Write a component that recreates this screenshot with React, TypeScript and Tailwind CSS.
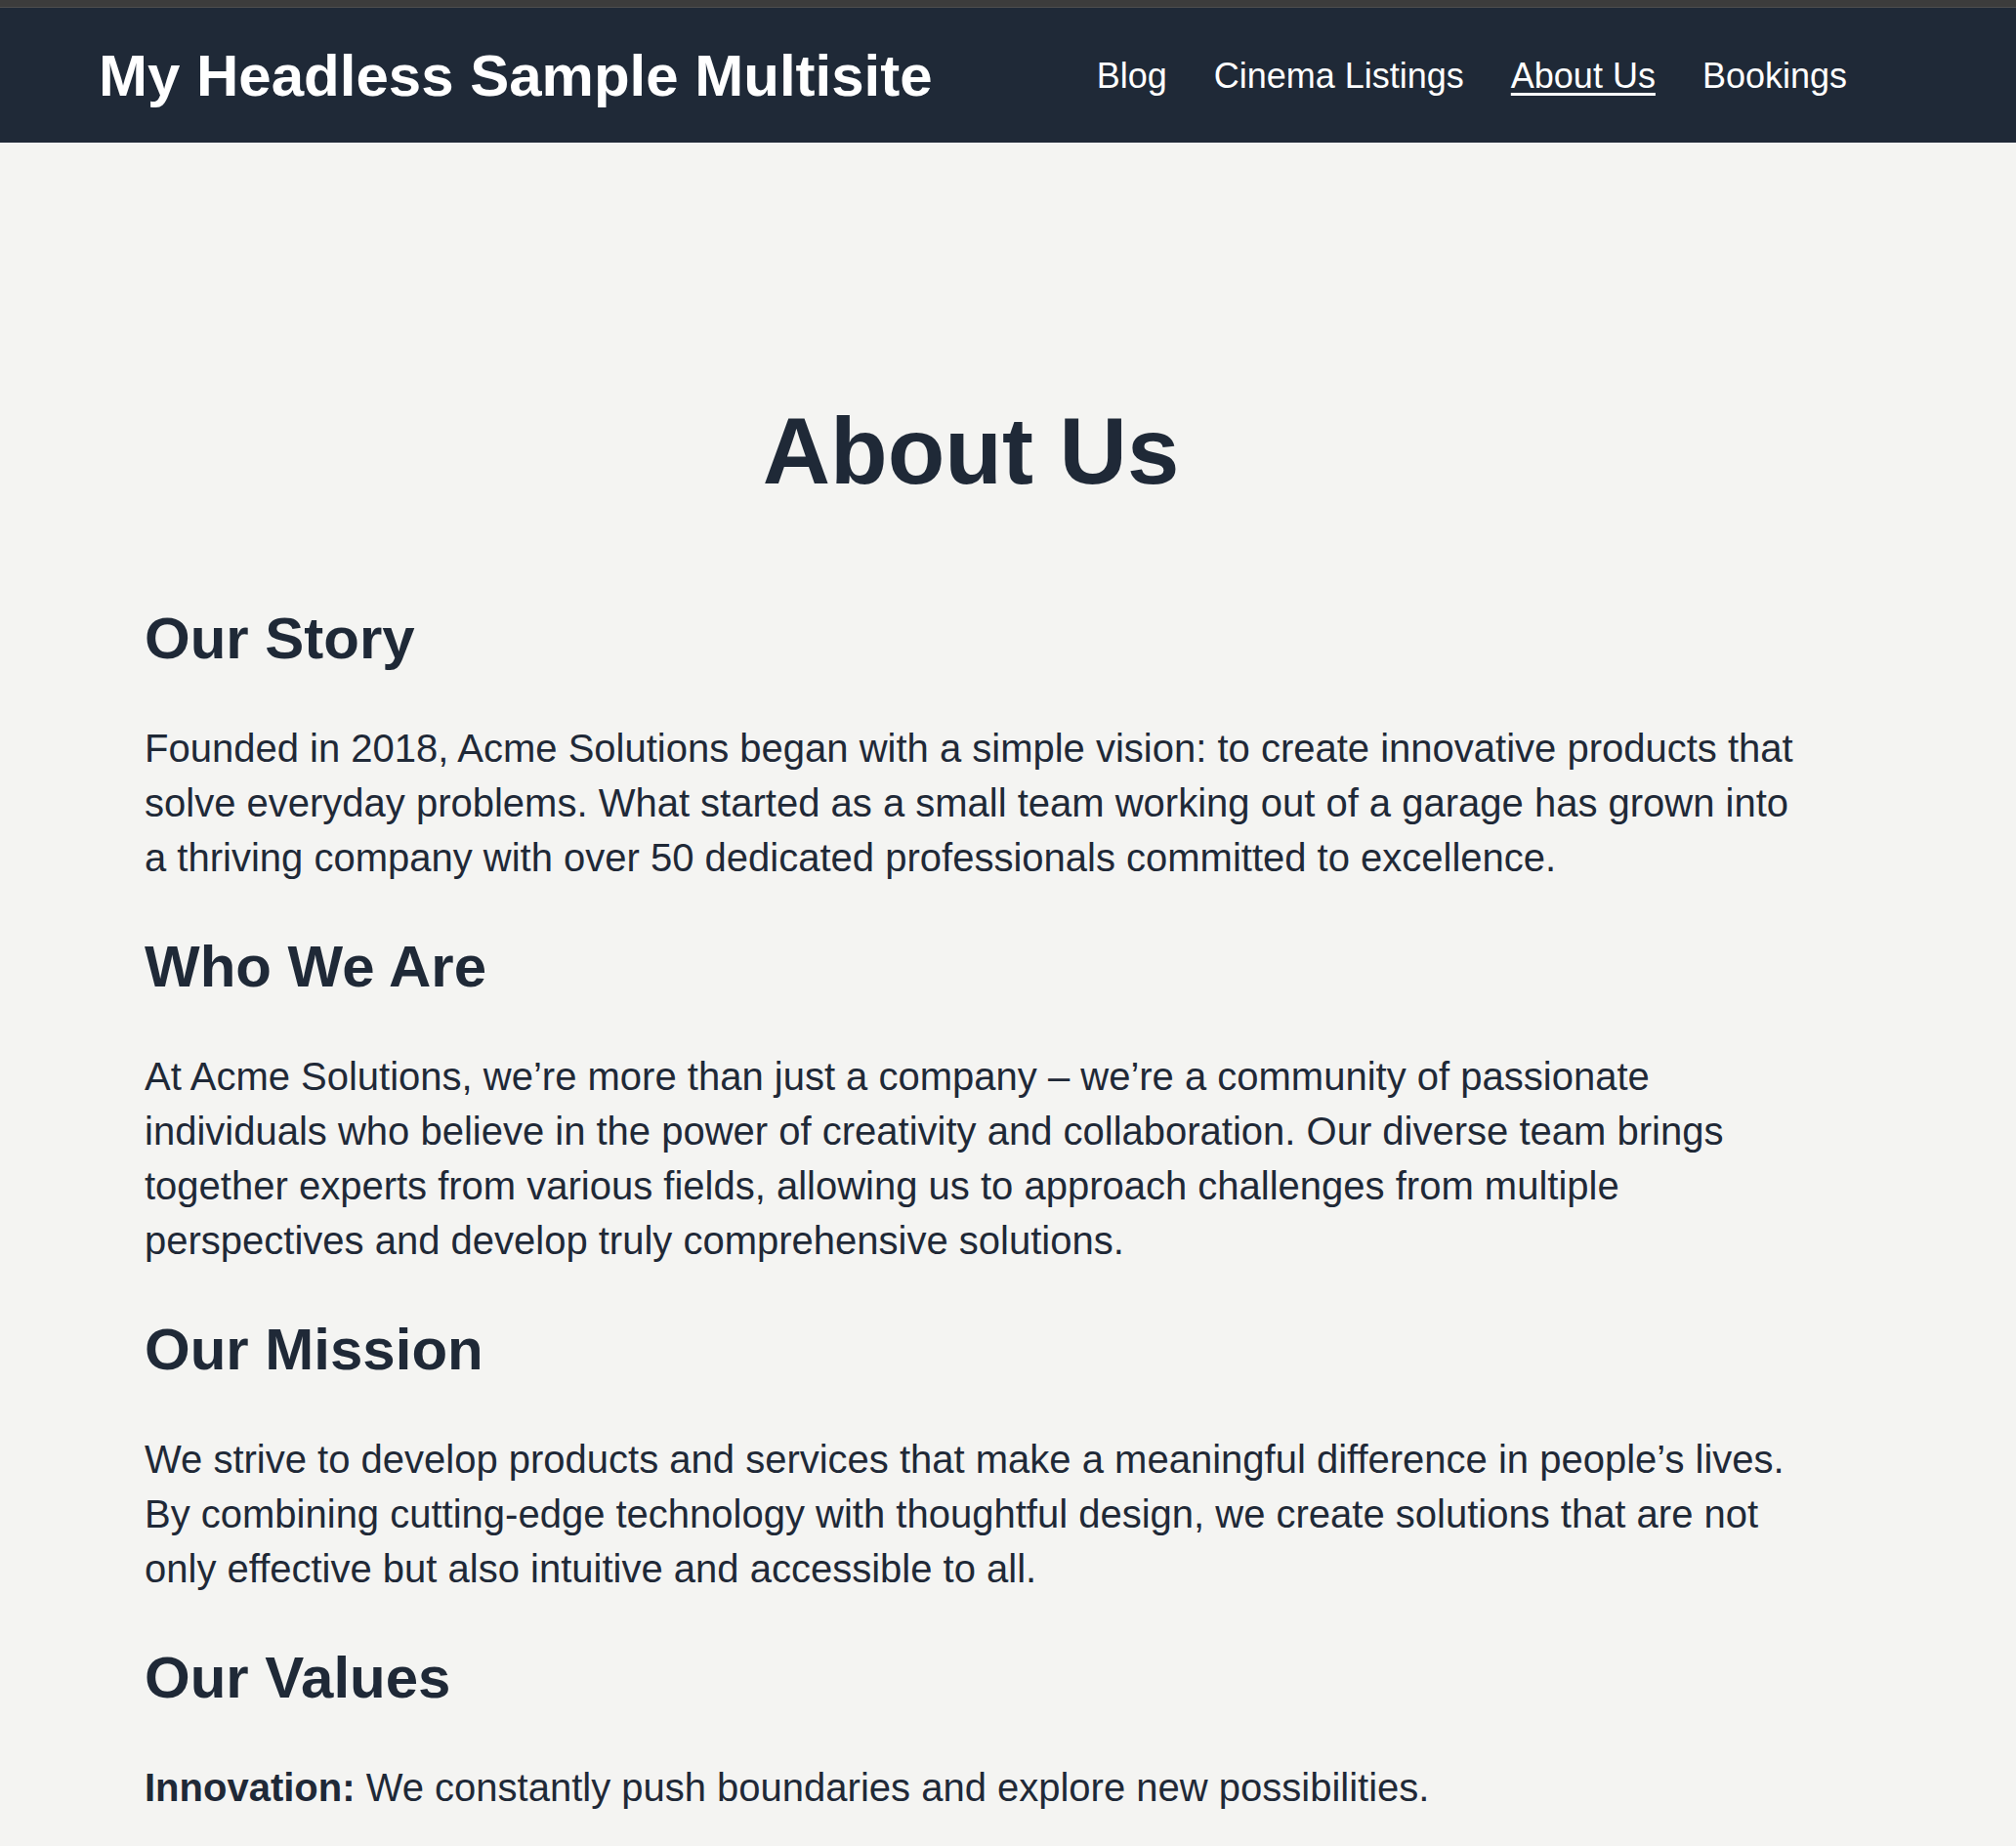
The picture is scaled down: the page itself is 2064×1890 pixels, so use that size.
const navLinks = [
  { label: "Blog", active: false },
  { label: "Cinema Listings", active: false },
  { label: "About Us", active: true },
  { label: "Bookings", active: false },
];

const sections = [
  {
    title: "Our Story",
    body: "Founded in 2018, Acme Solutions began with a simple vision: to create innovative products that solve everyday problems. What started as a small team working out of a garage has grown into a thriving company with over 50 dedicated professionals committed to excellence.",
  },
  {
    title: "Who We Are",
    body: "At Acme Solutions, we\u2019re more than just a company \u2013 we\u2019re a community of passionate individuals who believe in the power of creativity and collaboration. Our diverse team brings together experts from various fields, allowing us to approach challenges from multiple perspectives and develop truly comprehensive solutions.",
  },
  {
    title: "Our Mission",
    body: "We strive to develop products and services that make a meaningful difference in people\u2019s lives. By combining cutting-edge technology with thoughtful design, we create solutions that are not only effective but also intuitive and accessible to all.",
  },
];

export default function App() {
  return (
    <div className="min-h-screen bg-[#f4f4f2] font-['Liberation_Sans',Arial,sans-serif] text-[#1f2937]">
      {/* window chrome strip */}
      <div className="h-[7px] bg-[#3c3c3c]" />
      <div className="h-[1px] bg-[#4e4e4e]" />

      <header className="h-[138px] bg-[#1f2937] flex items-center justify-between pl-[101px] pr-[173px] pt-[2px]">
        <h1 className="text-[60px] leading-none font-bold text-white">My Headless Sample Multisite</h1>
        <nav className="flex items-center gap-[48px]">
          {navLinks.map((link) => (
            <a
              key={link.label}
              href="#"
              className={`text-[36px] leading-[56px] text-white ${link.active ? "underline decoration-[3px] underline-offset-[5px]" : ""}`}
            >
              {link.label}
            </a>
          ))}
        </nav>
      </header>

      <main className="pr-[76px] pt-[268px] pb-[120px]">
        <div className="max-w-[1692px] mx-auto">
          <h1 className="text-[96px] leading-none font-bold text-center mb-[108px]">About Us</h1>

          <div className="flex flex-col gap-[48px]">
            {sections.map((s) => (
              <div key={s.title} className="flex flex-col gap-[48px]">
                <h2 className="text-[60px] leading-[72px] font-bold">{s.title}</h2>
                <p className="text-[40px] leading-[56px]">{s.body}</p>
              </div>
            ))}

            <div className="flex flex-col gap-[48px]">
              <h2 className="text-[60px] leading-[72px] font-bold">Our Values</h2>
              <p className="text-[40px] leading-[56px]">
                <strong className="font-bold">Innovation:</strong> We constantly push boundaries and explore new possibilities.
              </p>
            </div>
          </div>
        </div>
      </main>
    </div>
  );
}
